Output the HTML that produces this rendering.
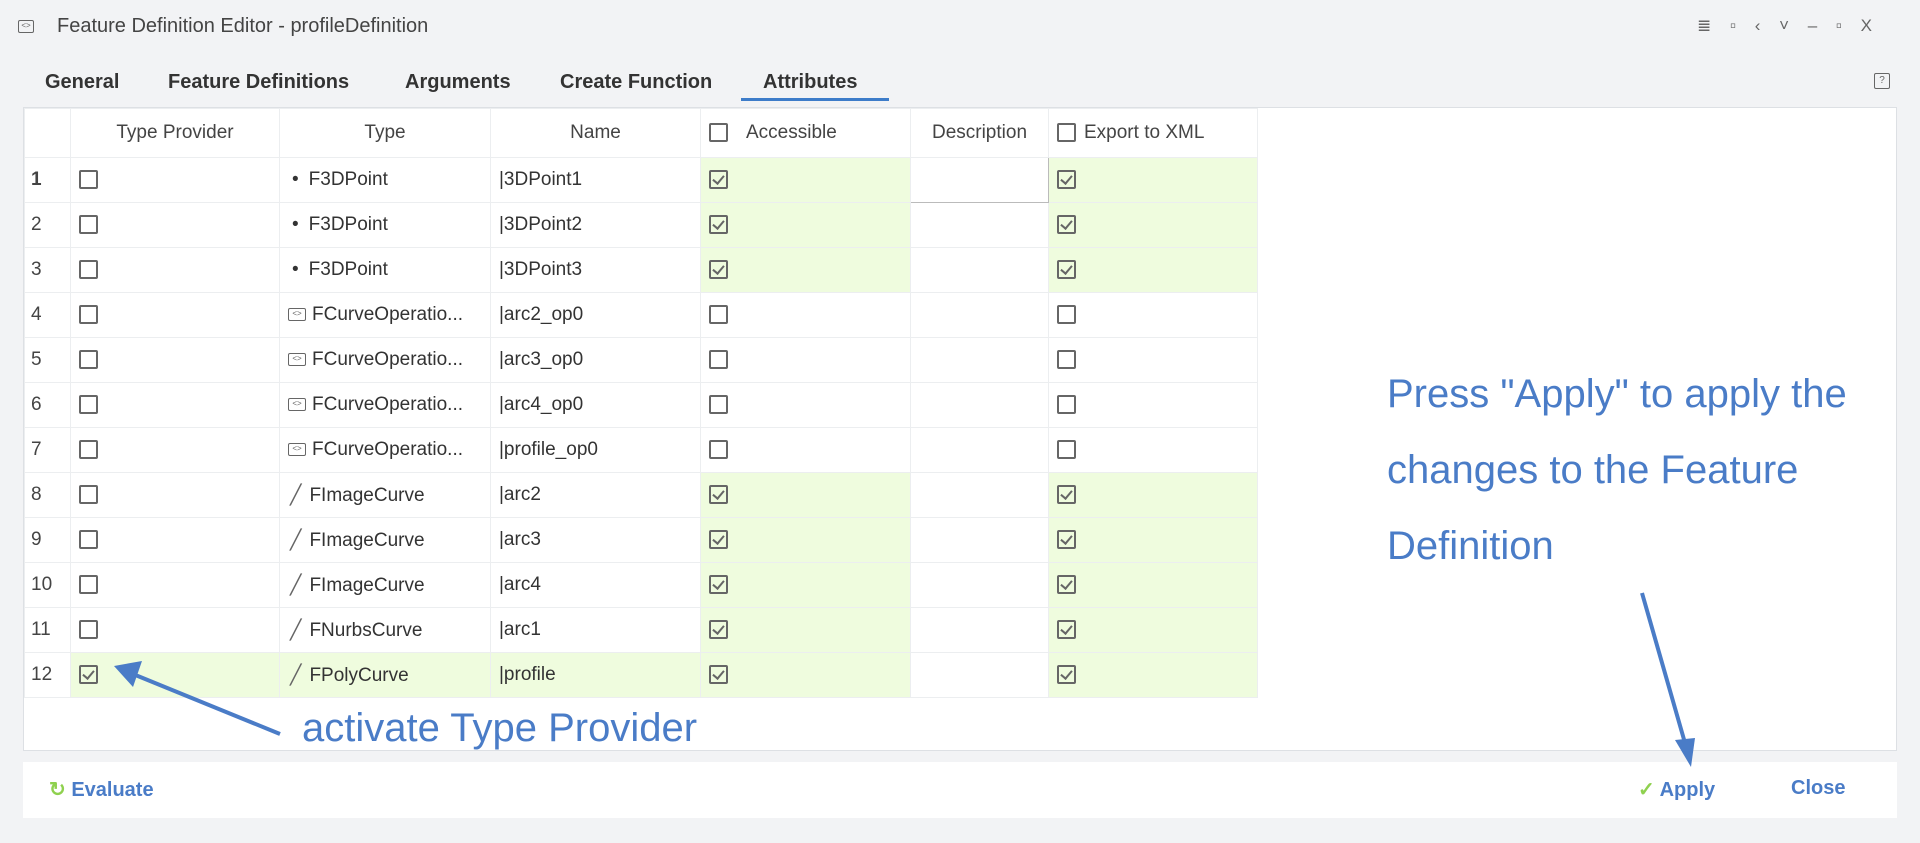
<!DOCTYPE html>
<html><head><meta charset="utf-8"><style>
*{box-sizing:border-box;margin:0;padding:0}
body{width:1920px;height:843px;background:#f2f3f5;font-family:"Liberation Sans",sans-serif;color:#333;position:relative;overflow:hidden}
.abs{position:absolute}
.title{left:57px;top:15px;font-size:20px;color:#444}
.tab{top:71px;font-size:20px;font-weight:bold;color:#333}
.panel{left:23px;top:107px;width:1874px;height:644px;background:#fff;border:1px solid #dde0e4}
table{border-collapse:collapse;position:absolute;left:0;top:0;table-layout:fixed}
td{border:1px solid #eceef0;height:45px;font-size:19px;padding:0 8px;white-space:nowrap;overflow:hidden}
tr.h td{height:49px;text-align:center;color:#444}
.g{background:#effcde}
.cb{display:inline-block;width:19px;height:19px;border:2px solid #666;border-radius:2px;vertical-align:middle;position:relative}
.ck::after{content:"";position:absolute;left:4px;top:1px;width:5px;height:9px;border:solid #666;border-width:0 2px 2px 0;transform:rotate(40deg)}
.num{color:#444;padding-left:6px}
.ann{color:#4a7cc7;font-size:40px;line-height:76px}
.bar{left:23px;top:762px;width:1874px;height:56px;background:#fff}
.btn{font-size:20px;font-weight:bold;color:#4a7cc7;top:777px}
.ic{display:inline-block;width:18px;height:13px;border:1.5px solid #666;border-radius:2px;vertical-align:middle;font-size:8px;line-height:9px;text-align:center;color:#666;margin-right:6px}
</style></head><body>
<div class="abs" style="left:18px;top:20px;width:16px;height:13px;border:1.5px solid #666;border-radius:2px;font-size:8px;line-height:10px;text-align:center;color:#666">&lt;&gt;</div>
<div class="abs title">Feature Definition Editor - profileDefinition</div>
<div class="abs" style="left:1697px;top:16px;font-size:17px;color:#666;word-spacing:14px">≣ ▫ ‹ ˅ – ▫ X</div>
<div class="abs tab" style="left:45px">General</div>
<div class="abs tab" style="left:168px">Feature Definitions</div>
<div class="abs tab" style="left:405px">Arguments</div>
<div class="abs tab" style="left:560px">Create Function</div>
<div class="abs tab" style="left:763px">Attributes</div>
<div class="abs" style="left:741px;top:98px;width:148px;height:3px;background:#3d7cc9"></div>
<div class="abs" style="left:1874px;top:73px;width:16px;height:16px;border:1.5px solid #666;border-radius:2px;font-size:10px;text-align:center;line-height:13px;color:#666">?</div>
<div class="abs panel">
<table>
<colgroup><col style="width:46px"><col style="width:209px"><col style="width:211px"><col style="width:210px"><col style="width:210px"><col style="width:138px"><col style="width:209px"></colgroup>
<tr class="h"><td></td><td>Type Provider</td><td>Type</td><td>Name</td><td style="text-align:left"><span class="cb" style="margin-right:18px"></span>Accessible</td><td>Description</td><td style="text-align:left"><span class="cb" style="margin-right:8px"></span>Export to XML</td></tr>
<tr><td class="num" style="font-weight:bold">1</td><td><span class="cb"></span></td><td><span style="margin:0 10px 0 4px">•</span>F3DPoint</td><td>|3DPoint1</td><td class="g"><span class="cb ck"></span></td><td style="border:1px solid #bbb"></td><td class="g"><span class="cb ck"></span></td></tr>
<tr><td class="num">2</td><td><span class="cb"></span></td><td><span style="margin:0 10px 0 4px">•</span>F3DPoint</td><td>|3DPoint2</td><td class="g"><span class="cb ck"></span></td><td></td><td class="g"><span class="cb ck"></span></td></tr>
<tr><td class="num">3</td><td><span class="cb"></span></td><td><span style="margin:0 10px 0 4px">•</span>F3DPoint</td><td>|3DPoint3</td><td class="g"><span class="cb ck"></span></td><td></td><td class="g"><span class="cb ck"></span></td></tr>
<tr><td class="num">4</td><td><span class="cb"></span></td><td><span class="ic">&lt;&gt;</span>FCurveOperatio...</td><td>|arc2_op0</td><td><span class="cb"></span></td><td></td><td><span class="cb"></span></td></tr>
<tr><td class="num">5</td><td><span class="cb"></span></td><td><span class="ic">&lt;&gt;</span>FCurveOperatio...</td><td>|arc3_op0</td><td><span class="cb"></span></td><td></td><td><span class="cb"></span></td></tr>
<tr><td class="num">6</td><td><span class="cb"></span></td><td><span class="ic">&lt;&gt;</span>FCurveOperatio...</td><td>|arc4_op0</td><td><span class="cb"></span></td><td></td><td><span class="cb"></span></td></tr>
<tr><td class="num">7</td><td><span class="cb"></span></td><td><span class="ic">&lt;&gt;</span>FCurveOperatio...</td><td>|profile_op0</td><td><span class="cb"></span></td><td></td><td><span class="cb"></span></td></tr>
<tr><td class="num">8</td><td><span class="cb"></span></td><td><span style="margin:0 8px 0 2px;color:#666">╱</span>FImageCurve</td><td>|arc2</td><td class="g"><span class="cb ck"></span></td><td></td><td class="g"><span class="cb ck"></span></td></tr>
<tr><td class="num">9</td><td><span class="cb"></span></td><td><span style="margin:0 8px 0 2px;color:#666">╱</span>FImageCurve</td><td>|arc3</td><td class="g"><span class="cb ck"></span></td><td></td><td class="g"><span class="cb ck"></span></td></tr>
<tr><td class="num">10</td><td><span class="cb"></span></td><td><span style="margin:0 8px 0 2px;color:#666">╱</span>FImageCurve</td><td>|arc4</td><td class="g"><span class="cb ck"></span></td><td></td><td class="g"><span class="cb ck"></span></td></tr>
<tr><td class="num">11</td><td><span class="cb"></span></td><td><span style="margin:0 8px 0 2px;color:#666">╱</span>FNurbsCurve</td><td>|arc1</td><td class="g"><span class="cb ck"></span></td><td></td><td class="g"><span class="cb ck"></span></td></tr>
<tr><td class="num">12</td><td class="g"><span class="cb ck"></span></td><td class="g"><span style="margin:0 8px 0 2px;color:#666">╱</span>FPolyCurve</td><td class="g">|profile</td><td class="g"><span class="cb ck"></span></td><td></td><td class="g"><span class="cb ck"></span></td></tr>
</table>
</div>
<div class="abs ann" style="left:1387px;top:356px">Press "Apply" to apply the<br>changes to the Feature<br>Definition</div>
<div class="abs ann" style="left:302px;top:690px">activate Type Provider</div>
<div class="abs bar"></div>
<div class="abs btn" style="left:49px"><span style="color:#8fd14f">↻</span> Evaluate</div>
<div class="abs btn" style="left:1638px"><span style="color:#8fd14f">✓</span> Apply</div>
<div class="abs btn" style="left:1791px">Close</div>
<svg class="abs" style="left:0;top:0" width="1920" height="843">
<line x1="280" y1="734" x2="128" y2="672" stroke="#4a7cc7" stroke-width="4"/>
<polygon points="114,666 142,661 133,687" fill="#4a7cc7"/>
<line x1="1642" y1="593" x2="1687" y2="750" stroke="#4a7cc7" stroke-width="4"/>
<polygon points="1691,767 1675,740 1695,738" fill="#4a7cc7"/>
</svg>
</body></html>
